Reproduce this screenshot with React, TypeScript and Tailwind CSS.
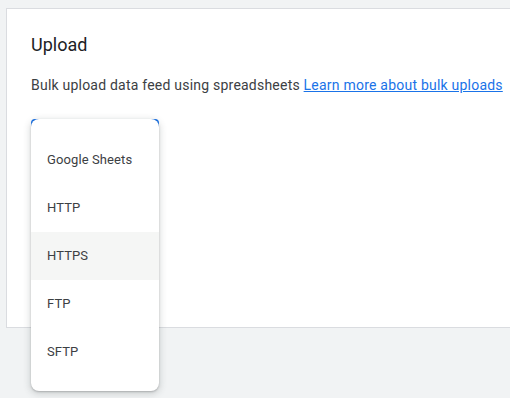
import React from 'react';

const options = ['Google Sheets', 'HTTP', 'HTTPS', 'FTP', 'SFTP'];

export default function App() {
    const active = 'HTTPS';

    return (
        <div className="w-[510px] h-[398px] bg-[#f1f3f4] pt-[8px] pl-[6px] overflow-hidden" style={{ fontFamily: 'Roboto, "Liberation Sans", sans-serif' }}>
            <div className="bg-white border border-[#dadce0] border-r-0 h-[320px] pl-[24px] pt-[24px]">
                <h2 className="text-[18px] leading-[24px] text-[#202124] font-normal">Upload</h2>
                <p className="mt-[18px] text-[14px] leading-[20px] text-[#3c4043] tracking-[0.22px] whitespace-nowrap">
                    Bulk upload data feed using spreadsheets{' '}
                    <a href="#" className="text-[#1a73e8] underline">Learn more about bulk uploads</a>
                </p>

                <div className="relative mt-[24px] w-[128px] h-[56px]">
                    <div className="absolute inset-0 rounded-[4px] border-2 border-[#1a73e8]" />
                    <div className="absolute left-0 top-0 w-[128px] z-10 bg-white rounded-[8px] pt-[17px] pb-[15px] shadow-[0_2px_6px_2px_rgba(60,64,67,0.15),0_1px_2px_rgba(60,64,67,0.3)]">
                        {options.map((o) => (
                            <div
                                key={o}
                                className={`h-[48px] flex items-center px-[16px] text-[13px] text-[#3c4043] tracking-[0.1px] ${o === active ? 'bg-[#f5f6f5]' : ''}`}
                            >
                                {o}
                            </div>
                        ))}
                    </div>
                </div>
            </div>
        </div>
    );
}
